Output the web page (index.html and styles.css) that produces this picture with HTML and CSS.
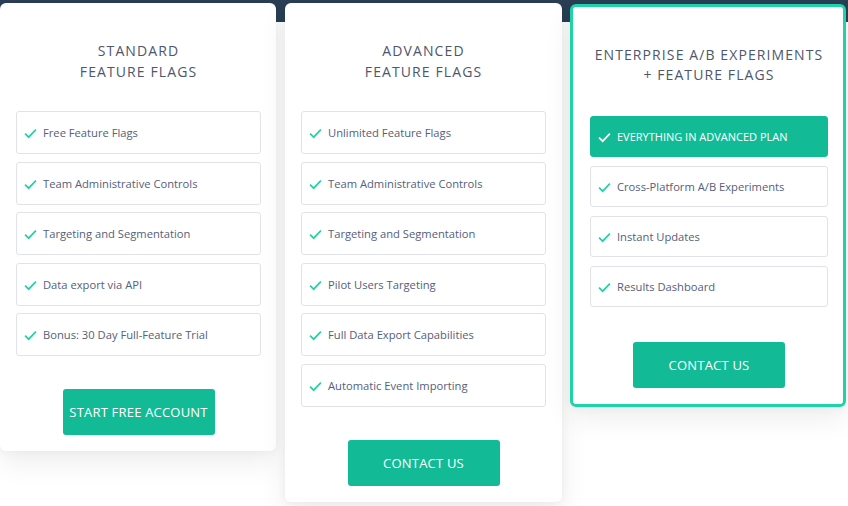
FILE: index.html
```html
<!DOCTYPE html>
<html>
<head>
<meta charset="utf-8">
<link rel="stylesheet" href="styles.css">
</head>
<body>
<div class="page">
  <div class="plans">
    <div class="card card-standard">
      <h2 class="title">STANDARD<br>FEATURE FLAGS</h2>
      <ul class="features">
        <li class="feature"><svg class="check" viewBox="0 0 12 10"><path d="M1 5.2 L4.3 8.4 L11 1.4"/></svg>Free Feature Flags</li>
        <li class="feature"><svg class="check" viewBox="0 0 12 10"><path d="M1 5.2 L4.3 8.4 L11 1.4"/></svg>Team Administrative Controls</li>
        <li class="feature"><svg class="check" viewBox="0 0 12 10"><path d="M1 5.2 L4.3 8.4 L11 1.4"/></svg>Targeting and Segmentation</li>
        <li class="feature"><svg class="check" viewBox="0 0 12 10"><path d="M1 5.2 L4.3 8.4 L11 1.4"/></svg>Data export via API</li>
        <li class="feature"><svg class="check" viewBox="0 0 12 10"><path d="M1 5.2 L4.3 8.4 L11 1.4"/></svg>Bonus: 30 Day Full-Feature Trial</li>
      </ul>
      <a class="btn">START FREE ACCOUNT</a>
    </div>
    <div class="card card-advanced">
      <h2 class="title">ADVANCED<br>FEATURE FLAGS</h2>
      <ul class="features">
        <li class="feature"><svg class="check" viewBox="0 0 12 10"><path d="M1 5.2 L4.3 8.4 L11 1.4"/></svg>Unlimited Feature Flags</li>
        <li class="feature"><svg class="check" viewBox="0 0 12 10"><path d="M1 5.2 L4.3 8.4 L11 1.4"/></svg>Team Administrative Controls</li>
        <li class="feature"><svg class="check" viewBox="0 0 12 10"><path d="M1 5.2 L4.3 8.4 L11 1.4"/></svg>Targeting and Segmentation</li>
        <li class="feature"><svg class="check" viewBox="0 0 12 10"><path d="M1 5.2 L4.3 8.4 L11 1.4"/></svg>Pilot Users Targeting</li>
        <li class="feature"><svg class="check" viewBox="0 0 12 10"><path d="M1 5.2 L4.3 8.4 L11 1.4"/></svg>Full Data Export Capabilities</li>
        <li class="feature"><svg class="check" viewBox="0 0 12 10"><path d="M1 5.2 L4.3 8.4 L11 1.4"/></svg>Automatic Event Importing</li>
      </ul>
      <a class="btn">CONTACT US</a>
    </div>
    <div class="card card-enterprise">
      <h2 class="title">ENTERPRISE A/B EXPERIMENTS<br>+ FEATURE FLAGS</h2>
      <ul class="features">
        <li class="feature feature-highlight"><svg class="check" viewBox="0 0 12 10"><path d="M1 5.2 L4.3 8.4 L11 1.4"/></svg>EVERYTHING IN ADVANCED PLAN</li>
        <li class="feature"><svg class="check" viewBox="0 0 12 10"><path d="M1 5.2 L4.3 8.4 L11 1.4"/></svg>Cross-Platform A/B Experiments</li>
        <li class="feature"><svg class="check" viewBox="0 0 12 10"><path d="M1 5.2 L4.3 8.4 L11 1.4"/></svg>Instant Updates</li>
        <li class="feature"><svg class="check" viewBox="0 0 12 10"><path d="M1 5.2 L4.3 8.4 L11 1.4"/></svg>Results Dashboard</li>
      </ul>
      <a class="btn">CONTACT US</a>
    </div>
  </div>
</div>
</body>
</html>
```
FILE: styles.css
```css
* { box-sizing: border-box; }
html, body { margin: 0; padding: 0; }
body {
  font-family: "Open Sans", "Liberation Sans", sans-serif;
  background: #ffffff;
  width: 848px;
  height: 506px;
  overflow: hidden;
}
.page {
  background: linear-gradient(#2b3f55 0, #2b3f55 22px, #ffffff 22px);
  height: 506px;
  padding-top: 3px;
}
.plans {
  display: flex;
  align-items: flex-start;
  gap: 9px;
}
.card {
  background: #fff;
  border-radius: 6px;
  box-shadow: 0 12px 28px rgba(0, 0, 0, 0.07), 0 0 10px rgba(0, 0, 0, 0.05);
  display: flex;
  flex-direction: column;
  align-items: center;
  padding: 37px 15px 16px 16px;
}
.card-standard { width: 276px; }
.card-advanced { width: 277px; padding-right: 16px; }
.card-enterprise {
  width: 276px;
  margin-top: 1px;
  border: 3px solid #1fd3a8;
  padding: 38px 15px 16px 17px;
  margin-left: -1px;
}
.title {
  margin: 0;
  font-weight: 400;
  font-size: 14px;
  line-height: 21px;
  letter-spacing: 1.1px;
  color: #4e566c;
  text-align: center;
}
.card-enterprise .title { line-height: 20px; }
.features {
  list-style: none;
  margin: 29px 0 0;
  padding: 0;
  width: 100%;
  display: flex;
  flex-direction: column;
  gap: 7.5px;
}
.card-enterprise .features { margin-top: 31px; gap: 9px; }
.feature {
  height: 43px;
  border: 1px solid #e1e3ec;
  border-radius: 3px;
  display: flex;
  align-items: center;
  padding-left: 7px;
  font-size: 11.2px;
  color: #55607a;
}
.card-enterprise .feature { height: 41px; }
.check {
  width: 13px;
  height: 11px;
  margin-right: 6px;
  margin-top: 2px;
  fill: none;
  stroke: #24d0a6;
  stroke-width: 1.6;
}
.feature-highlight {
  background: #12bb96;
  border-color: #12bb96;
  color: #fff;
  font-size: 11px;
}
.feature-highlight .check { stroke: #fff; }
.btn {
  display: flex;
  align-items: center;
  justify-content: center;
  width: 152px;
  height: 46px;
  margin-top: 33px;
  background: #12bb96;
  border-radius: 3px;
  color: #fff;
  font-size: 13px;
  letter-spacing: 0.2px;
}
.card-enterprise .btn { margin-top: 35px; }
```
